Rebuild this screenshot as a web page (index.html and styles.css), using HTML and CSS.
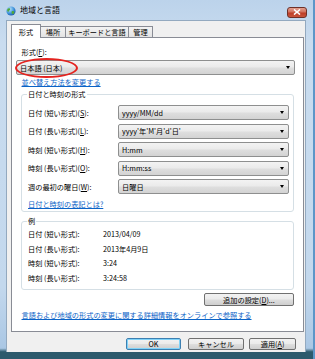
FILE: index.html
```html
<!DOCTYPE html>
<html lang="ja">
  <head>
    <meta charset="UTF-8" />
    <title>地域と言語</title>
    <link rel="stylesheet" href="styles.css">
  </head>
  <body>
    <div class="window">
      <div class="titlebar">
        <svg class="app-icon" width="10" height="10" viewBox="0 0 10 10">
          <defs>
            <radialGradient id="sea" cx="0.35" cy="0.3" r="0.8">
              <stop offset="0" stop-color="#bfe6ff" />
              <stop offset="0.6" stop-color="#3a8fd8" />
              <stop offset="1" stop-color="#1c4f9a" />
            </radialGradient>
          </defs>
          <circle cx="5" cy="5" r="4.6" fill="url(#sea)" />
          <path d="M2.2 2.6 C3.4 2 4.4 2.4 4.2 3.6 C4 4.6 2.8 4.4 2.6 5.6 C2.4 6.4 1.4 5.6 1.2 4.6 C1.1 3.8 1.5 3 2.2 2.6 Z" fill="#4fa83a" />
          <path d="M6 5.2 C7 4.8 8.4 5.2 8.2 6.4 C8 7.6 6.8 8.4 6.2 7.8 C5.6 7.2 5.2 5.6 6 5.2 Z" fill="#4fa83a" />
        </svg>
        <span class="title">地域と言語</span>
        <span class="close">
          <svg width="8" height="6" viewBox="0 0 8 6">
            <path d="M1 0.5 L7 5.5 M7 0.5 L1 5.5" stroke="#fff" stroke-width="1.6" />
          </svg>
        </span>
      </div>

      <div class="client">
        <div class="tabs">
          <div class="tab active tab-format">形式</div>
          <div class="tab tab-place">場所</div>
          <div class="tab tab-keyboard">キーボードと言語</div>
          <div class="tab tab-admin">管理</div>
        </div>

        <div class="panel">
          <div class="field-label">形式(<u>F</u>):</div>
          <div class="select wide">
            <span>日本語 (日本)</span>
            <i class="arrow"></i>
            <span class="mark"></span>
          </div>
          <a class="link first-link" href="#">並べ替え方法を変更する</a>

          <fieldset class="group formats">
            <legend>日付と時刻の形式</legend>
            <div class="rows">
              <div class="row">
                <span class="row-label">日付 (短い形式)(<u>S</u>):</span>
                <div class="select"><span>yyyy/MM/dd</span><i class="arrow"></i></div>
              </div>
              <div class="row">
                <span class="row-label">日付 (長い形式)(<u>L</u>):</span>
                <div class="select"><span>yyyy'年'M'月'd'日'</span><i class="arrow"></i></div>
              </div>
              <div class="row">
                <span class="row-label">時刻 (短い形式)(<u>H</u>):</span>
                <div class="select"><span>H:mm</span><i class="arrow"></i></div>
              </div>
              <div class="row">
                <span class="row-label">時刻 (長い形式)(<u>O</u>):</span>
                <div class="select"><span>H:mm:ss</span><i class="arrow"></i></div>
              </div>
              <div class="row">
                <span class="row-label">週の最初の曜日(<u>W</u>):</span>
                <div class="select"><span>日曜日</span><i class="arrow"></i></div>
              </div>
            </div>
            <a class="link group-link" href="#">日付と時刻の表記とは?</a>
          </fieldset>

          <fieldset class="group sample">
            <legend>例</legend>
            <div class="sample-row"><span class="sample-label">日付 (短い形式):</span><span>2013/04/09</span></div>
            <div class="sample-row"><span class="sample-label">日付 (長い形式):</span><span>2013年4月9日</span></div>
            <div class="sample-row"><span class="sample-label">時刻 (短い形式):</span><span>3:24</span></div>
            <div class="sample-row"><span class="sample-label">時刻 (長い形式):</span><span>3:24:58</span></div>
          </fieldset>

          <div class="more">
            <button class="btn more-btn">追加の設定(<u>D</u>)...</button>
          </div>
          <a class="link bottom-link" href="#">言語および地域の形式の変更に関する詳細情報をオンラインで参照する</a>
        </div>

        <div class="actions">
          <button class="btn ok">OK</button>
          <button class="btn cancel">キャンセル</button>
          <button class="btn apply">適用(<u>A</u>)</button>
        </div>
      </div>
    </div>
  </body>
</html>
```

FILE: styles.css
```css
/* Reset */
* {
  box-sizing: border-box;
  margin: 0;
  padding: 0;
}

body {
  width: 315px;
  height: 359px;
  overflow: hidden;
  font-family: "Noto Sans CJK JP", "Noto Sans", sans-serif;
  font-size: 7.2px;
  color: #000;
  background: #1f4a5c;
}

/* Aero window frame */
.window {
  height: 359px;
  padding: 0 7px 7px 6px;
  display: flex;
  flex-direction: column;
  background: linear-gradient(
    180deg,
    #bcd3eb 0%,
    #c9dcef 12%,
    #c3d8ed 80%,
    #aac7e4 97%,
    #2c5a6c 98%
  );
  border-right: 2px solid #5d96c8;
}

.titlebar {
  height: 20px;
  display: flex;
  align-items: center;
}

.app-icon {
  margin-top: 1px;
  flex: none;
}

.title {
  margin-left: 4px;
  font-size: 8px;
  line-height: 10px;
}

.close {
  margin-left: auto;
  margin-right: -1px;
  margin-top: 4px;
  width: 20px;
  height: 11px;
  display: flex;
  align-items: center;
  justify-content: center;
  border: 1px solid #6e3128;
  border-radius: 3px;
  background: linear-gradient(#e3a08f 0%, #d1705c 45%, #bd3d26 55%, #c9553c 100%);
}

/* Client area */
.client {
  flex: 1;
  padding: 3px 0 0 4px;
  background: #f0f0f0;
  border: 1px solid #93a9bf;
  border-bottom: none;
  display: flex;
  flex-direction: column;
}

.tabs {
  height: 13px;
  display: flex;
  align-items: flex-end;
}

.tab {
  height: 11px;
  line-height: 10px;
  text-align: center;
  border: 1px solid #898c95;
  border-bottom: none;
  border-left: none;
  background: linear-gradient(#f3f3f3, #e3e3e3);
}

.tab.active {
  position: relative;
  height: 14px;
  margin-bottom: -1px;
  padding-top: 2px;
  border-left: 1px solid #898c95;
  background: #fff;
}

.tab-format { width: 30px; }
.tab-place { width: 25px; }
.tab-keyboard { width: 63px; }
.tab-admin { width: 24px; }

.panel {
  width: 293px;
  height: 295px;
  padding: 0 8px 0 0;
  background: #fff;
  border: 1px solid #898c95;
  display: flex;
  flex-direction: column;
  align-items: flex-start;
}

.field-label {
  margin: 9px 0 0 9.5px;
  line-height: 10px;
}

/* Drop-down lists */
.select {
  position: relative;
  height: 15px;
  display: flex;
  align-items: center;
  padding-left: 3px;
  border: 1px solid #8e8f8f;
  border-radius: 2px;
  background: linear-gradient(#f3f3f3 0%, #ebebeb 45%, #dedede 55%, #d3d3d3 100%);
  line-height: 10px;
}

.select.wide {
  margin: 3px 0 0 4px;
  width: 279px;
}

.arrow {
  margin-left: auto;
  margin-right: 4px;
  border-top: 3px solid #000;
  border-left: 2.5px solid transparent;
  border-right: 2.5px solid transparent;
}

/* red annotation ring */
.mark {
  position: absolute;
  left: -2px;
  top: -3px;
  width: 63px;
  height: 20px;
  border: 2px solid #e4231f;
  border-radius: 50%;
}

.link {
  color: #0a63c7;
  text-decoration: underline;
  line-height: 10px;
}

.first-link {
  margin: 2px 0 0 9.5px;
}

/* Group boxes */
.group {
  width: 273px;
  margin-left: 9px;
  padding: 0 4px 2px 6px;
  border: 1px solid #d5dfe5;
  border-radius: 3px;
}

.group legend {
  margin-left: -1px;
  padding: 0 1px;
  line-height: 10px;
}

.formats {
  margin-top: 2px;
}

.rows {
  margin-top: 6px;
  display: flex;
  flex-direction: column;
  gap: 3.6px;
}

.row {
  display: flex;
  align-items: center;
}

.row-label {
  width: 90px;
  line-height: 10px;
}

.row .select {
  width: 171px;
}

.group-link {
  display: inline-block;
  margin-top: 5px;
}

.sample {
  margin-top: 4px;
  padding-top: 0.5px;
  padding-bottom: 4.5px;
}

.sample-row {
  display: flex;
  height: 14.5px;
  align-items: center;
  line-height: 10px;
}

.sample-label {
  width: 75px;
}

/* Buttons */
.btn {
  font-family: inherit;
  font-size: 7.2px;
  color: #000;
  line-height: 10px;
  border: 1px solid #707070;
  border-radius: 2px;
  background: linear-gradient(#f2f2f2 0%, #ebebeb 45%, #dddddd 55%, #cfcfcf 100%);
}

.more {
  align-self: stretch;
  display: flex;
  justify-content: flex-end;
  margin-top: 3px;
  padding-right: 1px;
}

.more-btn {
  width: 90px;
  height: 13px;
}

.bottom-link {
  margin: 4px 0 0 9.5px;
}

.actions {
  display: flex;
  padding-left: 115px;
  margin-top: 6px;
}

.actions .btn {
  height: 12px;
}

.ok {
  width: 55px;
  border-color: #3c7fb1;
  box-shadow: inset 0 0 0 1px #7fd2f8;
}

.cancel {
  width: 56px;
  margin-left: 7px;
}

.apply {
  width: 47px;
  margin-left: 5px;
}
```
